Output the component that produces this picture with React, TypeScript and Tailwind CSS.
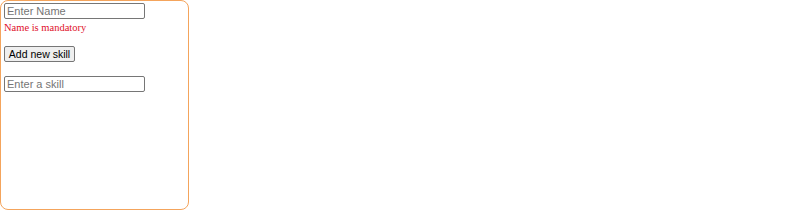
export default function App() {
  return (
    <div className="h-[210px] w-[800px] bg-white">
      <div className="box-border h-[210px] w-[189px] rounded-lg border border-[#f4a45c] px-[3px] pt-[2px]">
        <input
          placeholder="Enter Name"
          className="box-border block h-[16px] w-[141px] rounded-[2px] border border-[#767676] px-[2px] font-['Liberation_Sans',Arial,sans-serif] text-[11px] text-black placeholder:text-[#757575]"
        />
        <p className="mt-[3px] font-['Liberation_Serif','Times_New_Roman',serif] text-[10.5px] leading-[12px] text-[#e0102a]">
          Name is mandatory
        </p>
        <button className="mt-[12px] box-border block h-[16px] w-[71px] rounded-[2px] border border-[#767676] bg-[#efefef] font-['Liberation_Sans',Arial,sans-serif] text-[10.5px] leading-none text-black">
          Add new skill
        </button>
        <input
          placeholder="Enter a skill"
          className="mt-[14px] box-border block h-[16px] w-[141px] rounded-[2px] border border-[#767676] px-[2px] font-['Liberation_Sans',Arial,sans-serif] text-[11px] text-black placeholder:text-[#757575]"
        />
      </div>
    </div>
  );
}
